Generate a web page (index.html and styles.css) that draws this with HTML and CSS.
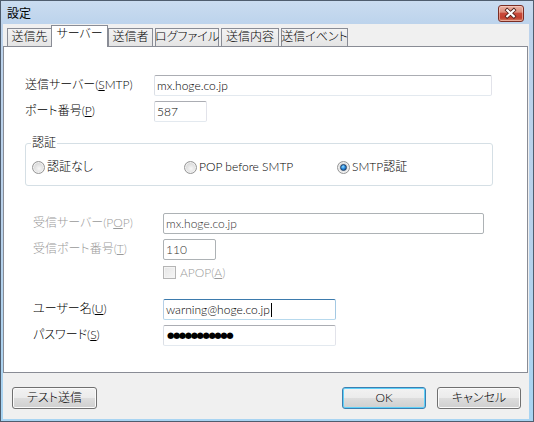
FILE: index.html
```html
<!DOCTYPE html>
<html lang="ja">
<head>
<meta charset="utf-8">
<title>設定</title>
<link rel="stylesheet" href="styles.css">
</head>
<body>
<div class="window">
  <div class="titlebar">
    <span class="title">設定</span>
    <div class="close">
      <svg width="25" height="17" viewBox="0 0 25 17">
        <path d="M8.5 5 L15.5 11.5 M15.5 5 L8.5 11.5" stroke="#4a1a14" stroke-width="3.8" stroke-linecap="square" fill="none"/>
        <path d="M8.5 5 L15.5 11.5 M15.5 5 L8.5 11.5" stroke="#ffffff" stroke-width="2.2" stroke-linecap="square" fill="none"/>
      </svg>
    </div>
  </div>
  <div class="client">
    <div class="tabs">
      <div class="tab t1">送信先</div>
      <div class="tab t2 active">サーバー</div>
      <div class="tab t3">送信者</div>
      <div class="tab t4">ログファイル</div>
      <div class="tab t5">送信内容</div>
      <div class="tab t6">送信イベント</div>
    </div>
    <div class="panel">
      <div class="row sec1 first">
        <span class="lbl">送信サーバー(<u>S</u>MTP)</span>
        <div class="input w-smtp">mx.hoge.co.jp</div>
      </div>
      <div class="row sec1">
        <span class="lbl">ポート番号(<u>P</u>)</span>
        <div class="input w-port">587</div>
      </div>
      <fieldset class="group">
        <legend>認証</legend>
        <div class="radios">
          <div class="opt"><span class="radio"></span><span>認証なし</span></div>
          <div class="opt"><span class="radio"></span><span>POP before SMTP</span></div>
          <div class="opt"><span class="radio checked"></span><span>SMTP認証</span></div>
        </div>
      </fieldset>
      <div class="row sec2 pop">
        <span class="lbl dis">受信サーバー(P<u>O</u>P)</span>
        <div class="input disabled w-pop">mx.hoge.co.jp</div>
      </div>
      <div class="row sec2">
        <span class="lbl dis">受信ポート番号(<u>T</u>)</span>
        <div class="input disabled w-port">110</div>
      </div>
      <div class="row sec2 chkrow">
        <span class="lbl"></span>
        <span class="check"></span><span class="dis chklabel">APOP(<u>A</u>)</span>
      </div>
      <div class="row sec2 user">
        <span class="lbl">ユーザー名(<u>U</u>)</span>
        <div class="input focus w-user">warning@hoge.co.jp<span class="caret"></span></div>
      </div>
      <div class="row sec2">
        <span class="lbl">パスワード(<u>S</u>)</span>
        <div class="input w-user"><span class="dots">●●●●●●●●●●●</span></div>
      </div>
    </div>
    <div class="buttons">
      <div class="btn b-test">テスト送信</div>
      <div class="spacer"></div>
      <div class="btn default b-ok">OK</div>
      <div class="btn b-cancel">キャンセル</div>
    </div>
  </div>
</div>
</body>
</html>
```

FILE: styles.css
```css
* { box-sizing: border-box; }

html, body {
  margin: 0;
  padding: 0;
}

body {
  width: 534px;
  height: 422px;
  overflow: hidden;
  font-family: "Lato", "Noto Sans CJK JP", sans-serif;
  font-size: 12px;
  font-weight: 300;
  font-feature-settings: "palt" 1;
  color: #000;
  background: #fff;
}

.window {
  width: 534px;
  height: 422px;
  border: 1px solid #4f5d6e;
  padding: 0 4px 2px 2px;
  background: linear-gradient(to bottom, #cadcf0 0, #bcd3ec 24px, #b9d1ea 50%, #a8d4f2 100%);
  display: flex;
  flex-direction: column;
}

.titlebar {
  height: 23px;
  display: flex;
  justify-content: space-between;
  align-items: flex-start;
  padding: 0 5px 0 4px;
}

.title {
  font-size: 12px;
  font-weight: 400;
  line-height: 14px;
  margin-top: 6px;
}

.close {
  width: 26px;
  height: 17px;
  margin-top: 4px;
  border: 1px solid #7a2e25;
  border-radius: 3px;
  background: linear-gradient(to bottom, #eab3a5 0, #dc8d7c 40%, #c8493a 50%, #c2402f 80%, #d6856a 100%);
  box-shadow: inset 0 0 0 1px rgba(255, 220, 210, 0.5);
  display: flex;
  align-items: center;
  justify-content: center;
}

.close svg { display: block; }

.client {
  flex: 1;
  background: #f0f0f0;
  display: flex;
  flex-direction: column;
}

.tabs {
  display: flex;
  align-items: flex-start;
  height: 23px;
  margin-bottom: -1px;
}

.tab {
  height: 18px;
  margin-top: 4px;
  border: 1px solid #898c95;
  border-bottom: none;
  background: linear-gradient(to bottom, #f3f3f3, #e4e4e4);
  display: flex;
  justify-content: center;
  align-items: flex-start;
  padding-top: 1px;
  line-height: 14px;
  white-space: nowrap;
}

.tab.active {
  height: 22px;
  margin-top: 1px;
  background: #fff;
  position: relative;
  z-index: 1;
}

.t1 { margin-left: 4px; width: 45px; }
.t2 { margin-left: -1px; width: 57px; }
.t3 { margin-left: 0; width: 45px; }
.t4 { margin-left: 2px; width: 64px; }
.t5 { margin-left: 2px; width: 58px; }
.t6 { margin-left: 2px; width: 67px; }

.panel {
  height: 327px;
  margin-right: 1px;
  background: #fff;
  border: 1px solid #898c95;
  padding-top: 28px;
}

.row {
  display: flex;
  align-items: center;
  height: 21px;
  margin-top: 5px;
}

.row.first { margin-top: 0; }

.sec1 { padding-left: 21px; }
.sec1 .lbl { width: 129px; }
.sec2 { padding-left: 29px; }
.sec2 .lbl { width: 130px; }

.lbl {
  line-height: 14px;
  white-space: nowrap;
  margin-top: -2px;
}

.dis { color: #9a9a9a; }

.input {
  height: 21px;
  border: 1px solid;
  border-color: #abadb3 #e2e3ea #e3e9ef #dbdfe6;
  border-radius: 2px;
  background: #fff;
  padding: 0 2px;
  line-height: 19px;
  white-space: nowrap;
  display: flex;
  align-items: center;
}

.input.disabled {
  border-color: #adb2b5;
  color: #333;
}

.input.focus {
  border-color: #3d7bad #a4c9e3 #b7d9ed #b5cfe7;
}

.w-smtp { width: 338px; }
.w-port { width: 53px; }
.w-pop { width: 321px; }
.w-user { width: 173px; }

.caret {
  display: inline-block;
  width: 1px;
  height: 14px;
  margin-left: 1px;
  background: #000;
}

.dots {
  font-family: "DejaVu Sans", sans-serif;
  font-weight: 400;
  font-size: 8.5px;
  letter-spacing: -1.5px;
  line-height: 19px;
  padding-left: 1px;
}

.group {
  margin: 14px 0 0 21px;
  width: 468px;
  border: 1px solid #d5dfe5;
  border-radius: 3px;
  padding: 10px 5px 11px 5px;
}

.group legend {
  padding: 0 1px;
  line-height: 14px;
}

.radios {
  display: grid;
  grid-template-columns: 152px 153px auto;
  padding-left: 1px;
}

.opt {
  display: flex;
  align-items: center;
  gap: 2px;
  line-height: 14px;
  white-space: nowrap;
}

.radio {
  width: 13px;
  height: 13px;
  flex: none;
  border-radius: 50%;
  border: 1px solid #969696;
  background: radial-gradient(circle at 55% 60%, #f7f7f7 0, #e2e2e2 45%, #c9c9c9 100%);
  box-shadow: inset 0 0 0 1px #f2f2f2;
  display: flex;
  align-items: center;
  justify-content: center;
}

.radio.checked::after {
  content: "";
  width: 7px;
  height: 7px;
  border-radius: 50%;
  background: radial-gradient(circle at 40% 35%, #9be0ff 0, #2a8be0 45%, #0c3f7a 100%);
  border: 1px solid #1d3f66;
  box-sizing: border-box;
}

.pop { margin-top: 27px; }

.chkrow { margin-top: 6px; height: 13px; }

.check {
  width: 13px;
  height: 13px;
  flex: none;
  border: 1px solid #b5b5b5;
  background: linear-gradient(to bottom right, #e6e6e6, #f6f6f6);
  box-shadow: inset 0 0 0 1px #f4f4f4;
}

.chklabel {
  margin-left: 4px;
  line-height: 14px;
  white-space: nowrap;
}

.user { margin-top: 20px; }

.buttons {
  display: flex;
  align-items: flex-start;
  padding: 14px 8px 0 9px;
}

.spacer { flex: 1; }

.btn {
  height: 22px;
  border: 1px solid #707070;
  border-radius: 3px;
  background: linear-gradient(to bottom, #f2f2f2 0, #ebebeb 50%, #dddddd 51%, #cfcfcf 100%);
  box-shadow: inset 0 0 0 1px #fbfbfb;
  display: flex;
  align-items: center;
  justify-content: center;
  line-height: 14px;
  white-space: nowrap;
}

.btn.default {
  border-color: #3c7fb1;
  box-shadow: inset 0 0 0 1px #5fd0f8;
}

.b-test { width: 85px; }
.b-ok { width: 84px; }
.b-cancel { width: 84px; margin-left: 11px; }
```
